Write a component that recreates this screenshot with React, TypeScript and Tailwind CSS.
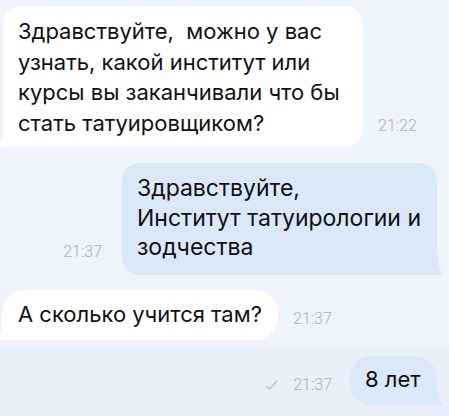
import React from "react";

const font = "font-['Inter','Liberation_Sans',sans-serif]";

function TailLeft({ color }: { color: string }) {
  return (
    <svg className="absolute left-[-5px] bottom-0" width="20" height="20" viewBox="0 0 20 20">
      <path d="M20 0 H5 C5 10 3 16 0 20 C6 20 14 19 20 16 Z" fill={color} />
    </svg>
  );
}

function TailRight({ color }: { color: string }) {
  return (
    <svg className="absolute right-[-6px] bottom-0" width="20" height="20" viewBox="0 0 20 20">
      <path d="M0 0 H15 C15 10 17 16 20 20 C14 20 6 19 0 16 Z" fill={color} />
    </svg>
  );
}

const timeCls = "text-[16px] leading-[18px] font-light text-[#a9b2bc] font-['Roboto',sans-serif]";

export default function App() {
  return (
    <div className={`w-[449px] h-[416px] overflow-hidden bg-[#eef4fb] ${font} text-[#111111]`}>
      <div className="flex flex-col">
        {/* Row 1 */}
        <div className="flex items-end pt-[6px] pl-[3px]">
          <div className="relative w-[360px] h-[141px] bg-white rounded-[18px] rounded-bl-none pl-[15px] pt-[10px] text-[22px] leading-[30.5px]">
            <TailLeft color="#ffffff" />
            <div className="relative whitespace-pre">
              <div>Здравствуйте,  можно у вас</div>
              <div>узнать, какой институт или</div>
              <div>курсы вы заканчивали что бы</div>
              <div>стать татуировщиком?</div>
            </div>
          </div>
          <div className={`ml-[15px] mb-[12px] ${timeCls}`}>21:22</div>
        </div>

        {/* Row 2 */}
        <div className="flex items-end justify-end pt-[16px] pr-[12px]">
          <div className={`mr-[20px] mb-[14px] ${timeCls}`}>21:37</div>
          <div className="relative w-[315px] h-[112px] bg-[#dae8f8] rounded-[18px] rounded-br-none pl-[15px] pt-[11px] text-[23px] leading-[29.5px]">
            <TailRight color="#dae8f8" />
            <div className="relative whitespace-pre">
              <div>Здравствуйте,</div>
              <div>Институт татуирологии и</div>
              <div>зодчества</div>
            </div>
          </div>
        </div>

        {/* Row 3 */}
        <div className="flex items-end pt-[15px] pl-[2px]">
          <div className="relative w-[276px] h-[50px] bg-white rounded-[22px] rounded-bl-none pl-[16px] pt-[9px] text-[22px] leading-[30px]">
            <TailLeft color="#ffffff" />
            <div className="relative whitespace-pre">А сколько учится там?</div>
          </div>
          <div className={`ml-[15px] mb-[12px] ${timeCls}`}>21:37</div>
        </div>
      </div>

      {/* Row 4 band */}
      <div className="mt-[7px] h-[70px] bg-[#e8f0f9] flex items-end justify-end pr-[12px] pb-[11px]">
        <div className={`flex items-center mb-[12px] mr-[18px] ${timeCls}`}>
          <svg width="13" height="10" viewBox="0 0 13 10" className="mr-[15px]">
            <path d="M1 6 L4.5 9 L12 1" fill="none" stroke="#b3bcc6" strokeWidth="1.1" />
          </svg>
          <span>21:37</span>
        </div>
        <div className="relative w-[87px] h-[50px] bg-[#dae8f8] rounded-[22px] rounded-br-none pl-[15px] pt-[8px] text-[22px] leading-[30px]">
          <TailRight color="#dae8f8" />
          <div className="relative whitespace-pre">8 лет</div>
        </div>
      </div>
    </div>
  );
}
